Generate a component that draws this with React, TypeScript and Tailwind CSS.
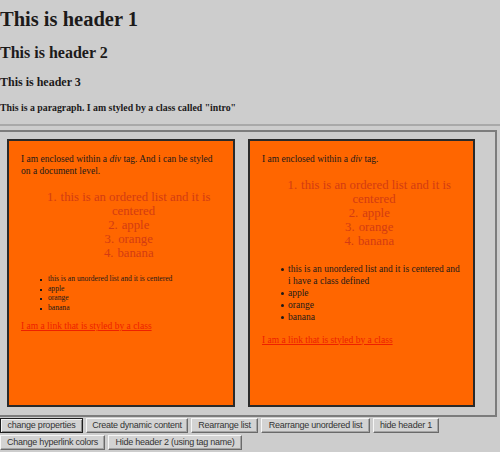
import React from "react";

const serif = { fontFamily: '"Liberation Serif", "Times New Roman", serif' };

function OlItem({ n, children }: { n: number; children: React.ReactNode }) {
  return (
    <li className="text-center">
      <span className="inline-flex w-0 justify-end whitespace-nowrap pr-[4px]">{n}.</span>
      {children}
    </li>
  );
}

function Ordered() {
  return (
    <ol className="pl-[25px] text-[12.75px] leading-[14px] text-[#d33c12]">
      <OlItem n={1}>this is an ordered list and it is centered</OlItem>
      <OlItem n={2}>apple</OlItem>
      <OlItem n={3}>orange</OlItem>
      <OlItem n={4}>banana</OlItem>
    </ol>
  );
}

function SmallUl() {
  const items = ["this is an unordered list and it is centered", "apple", "orange", "banana"];
  return (
    <ul className="mt-[14px] pl-[19px] text-[7.6px] leading-[9.6px] text-[#1c1a1a]">
      {items.map((t) => (
        <li key={t} className="flex">
          <span className="w-[8px] shrink-0">
            <span className="mt-[5px] block h-[2px] w-[2px] bg-[#1c1a1a]" />
          </span>
          <span>{t}</span>
        </li>
      ))}
    </ul>
  );
}

function BigUl() {
  const items = [
    "this is an unordered list and it is centered and i have a class defined",
    "apple",
    "orange",
    "banana",
  ];
  return (
    <ul className="mt-[14.5px] pl-[19px] text-[9.5px] leading-[12px] text-[#1c1a1a]">
      {items.map((t) => (
        <li key={t} className="flex">
          <span className="w-[7px] shrink-0">
            <span className="mt-[5px] block h-[3px] w-[3px] rounded-full bg-[#1c1a1a]" />
          </span>
          <span>{t}</span>
        </li>
      ))}
    </ul>
  );
}

function Btn({ w, children, focus }: { w: number; children: React.ReactNode; focus?: boolean }) {
  return (
    <button
      style={{ width: w, fontFamily: '"Liberation Sans", Arial, sans-serif' }}
      className={
        "flex h-[15px] shrink-0 items-center justify-center whitespace-nowrap bg-[#d3d3d3] text-[9px] leading-none tracking-[-0.25px] text-[#333] " +
        (focus
          ? "border border-[#1e1e1e] shadow-[inset_1px_1px_0_#f4f4f4,inset_-1px_-1px_0_#8a8a8a]"
          : "border border-t-[#f6f6f6] border-l-[#f6f6f6] border-r-[#6a6a6a] border-b-[#6a6a6a] shadow-[inset_-1px_-1px_0_#a4a4a4]")
      }
    >
      {children}
    </button>
  );
}

export default function App() {
  return (
    <div className="h-[452px] w-[500px] overflow-hidden bg-[#cdcdcd] text-[#1c1a1a]" style={serif}>
      <h1 className="mt-[7px] text-[20.5px] font-bold leading-[24px]">This is header 1</h1>
      <h2 className="mt-[12px] text-[16px] font-bold leading-[20px]">This is header 2</h2>
      <h3 className="mt-[12px] text-[12px] font-bold leading-[14px]">This is header 3</h3>
      <p className="mt-[13px] text-[9.8px] font-bold leading-[12px]">
        This is a paragraph. I am styled by a class called "intro"
      </p>
      <div className="mt-[10px] h-[2px] w-full bg-[#a9a9a9]" />

      <div className="mt-[4px] flex w-[497px] gap-[13px] border-t-2 border-r-2 border-b-2 border-[#7c7c7c] pt-[7px] pr-[20px] pb-[8px] pl-[7px]">
        <div className="h-[268px] w-[228px] shrink-0 border-2 border-[#2a2a2a] border-l-dotted bg-[#ff6600] px-[12px] pt-[12px]">
          <p className="text-[9.5px] leading-[12px]">
            I am enclosed within a <i>div</i> tag. And i can be styled on a document level.
          </p>
          <div className="mt-[13px]">
            <Ordered />
          </div>
          <SmallUl />
          <a href="#" className="mt-[8px] block text-[9.5px] leading-[12px] text-[#ee2000] underline">
            I am a link that is styled by a class
          </a>
        </div>
        <div className="h-[268px] w-[227px] shrink-0 border-2 border-[#2a2a2a] border-r-dotted bg-[#ff6600] pl-[12px] pr-[10px] pt-[12px]">
          <p className="text-[9.5px] leading-[12px]">
            I am enclosed within a <i>div</i> tag.
          </p>
          <div className="mt-[13px] pr-[2px]">
            <Ordered />
          </div>
          <BigUl />
          <a href="#" className="mt-[11px] block text-[9.5px] leading-[12px] text-[#ee2000] underline">
            I am a link that is styled by a class
          </a>
        </div>
      </div>

      <div className="mt-[1px] flex gap-[3px]">
        <Btn w={83} focus>change properties</Btn>
        <Btn w={102}>Create dynamic content</Btn>
        <Btn w={67}>Rearrange list</Btn>
        <Btn w={109}>Rearrange unordered list</Btn>
        <Btn w={66}>hide header 1</Btn>
      </div>
      <div className="mt-[2px] flex gap-[3px]">
        <Btn w={105}>Change hyperlink colors</Btn>
        <Btn w={134}>Hide header 2 (using tag name)</Btn>
      </div>
    </div>
  );
}
